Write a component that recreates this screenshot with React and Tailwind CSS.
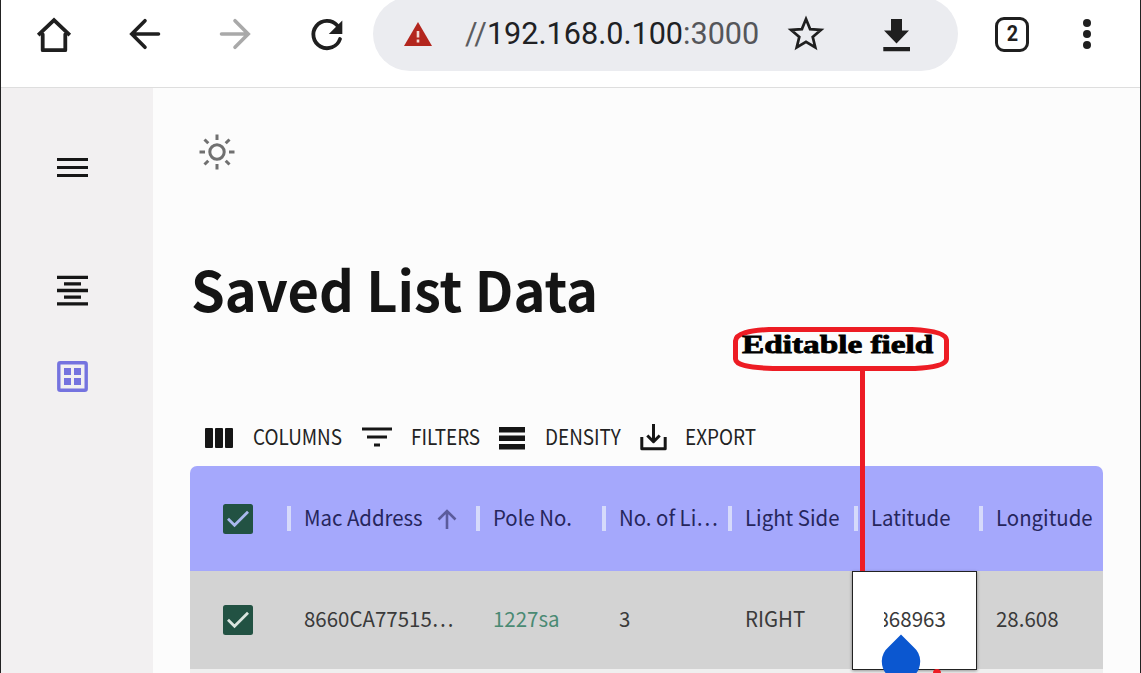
import React from "react";

const columns = [
  { label: "Mac Address", width: "w-[189px]", value: "8660CA77515…", sorted: true },
  { label: "Pole No.", width: "w-[126px]", value: "1227sa", green: true },
  { label: "No. of Li…", width: "w-[126px]", value: "3" },
  { label: "Light Side", width: "w-[126px]", value: "RIGHT" },
  { label: "Latitude", width: "w-[125px]", value: "868963", editing: true },
  { label: "Longitude", width: "w-[122px]", value: "28.608" },
];

function Checkbox({ tick }) {
  return (
    <svg className="block h-[30px] w-[30px]" viewBox="0 0 30 30">
      <rect width="30" height="30" rx="2.5" fill="#225243" />
      <path d="M5 14.8 11.5 21.2 25 7.8" fill="none" stroke={tick} strokeWidth="2.8" />
    </svg>
  );
}

function Browser() {
  return (
    <header className="flex h-[88px] shrink-0 items-start overflow-hidden border-b border-[#dedede] bg-white">
      <nav className="flex w-[372px] items-center pt-[15px] pl-[33px]">
        <svg className="h-10 w-10" viewBox="0 0 40 40" fill="none" stroke="#1f1f1f" strokeWidth="3.8" strokeLinejoin="round" strokeLinecap="round">
          <path d="M8.7 19.3V35.2H31.3V19.3" />
          <path d="M4.2 20.200 20 5.200 35.800 20.200" strokeLinejoin="miter" strokeLinecap="butt" />
        </svg>
        <svg className="ml-[50px] h-10 w-10" viewBox="0 0 40 40" fill="none" stroke="#1f1f1f" strokeWidth="3.6" strokeLinecap="round">
          <path d="M34.500 19H8M21 5.700 7.800 19 21 32.300" />
        </svg>
        <svg className="ml-[51px] h-10 w-10" viewBox="0 0 40 40" fill="none" stroke="#a9a9a9" strokeWidth="3.6" strokeLinecap="round">
          <path d="M6.500 19H33M20 5.700 33.200 19 20 32.300" />
        </svg>
        <svg className="ml-[52px] h-10 w-10" viewBox="0 0 40 40" fill="none" stroke="#1f1f1f" strokeWidth="3.8">
          <path d="M33 24A13.7 13.7 0 1 1 30.3 10.4" strokeLinecap="round" />
          <path d="M35.3 5.500V19H21.8Z" fill="#1f1f1f" stroke="none" />
        </svg>
      </nav>
      <div className="-mt-[3px] flex h-[74px] w-[585px] items-center rounded-full bg-[#ebecf0] pl-[31px]">
        <svg className="h-[26px] w-[28px]" viewBox="0 0 28 26">
          <path d="M14 1 28 25H0Z" fill="#b3261e" />
          <path d="M14 10v6.500M14 18.500v3" stroke="#f3d9d5" strokeWidth="2.6" />
        </svg>
        <div className="ml-[33px] w-[296px] whitespace-nowrap font-[Roboto,sans-serif] text-[30.6px] leading-none text-[#202124]">
          <span className="text-[#5b5c60]">//</span>192.168.0.100<span className="text-[#55565a]">:3000</span>
        </div>
        <svg className="ml-[25px] h-10 w-10" viewBox="0 0 40 40" fill="none" stroke="#1f1f1f" strokeWidth="2.7">
          <path d="M20 5 24.1 15.1 35 15.9 26.7 22.9 29.3 33.5 20 27.8 10.7 33.5 13.3 22.9 5 15.9 15.9 15.1Z" />
        </svg>
        <svg className="ml-[50px] h-10 w-10" viewBox="0 0 40 40" fill="#1f1f1f">
          <path d="M15 5H26V16.500H33L20.5 29.500 8 16.500H15ZM7.3 33H34V37.200H7.3Z" />
        </svg>
      </div>
      <div className="mt-[17px] ml-[37px] flex h-[35px] w-[34px] items-center justify-center rounded-[9px] border-[3.5px] border-[#1f1f1f] font-[Roboto,sans-serif] text-[22px] leading-none font-bold text-[#1f1f1f]">
        <span className="relative -top-px scale-x-90">2</span>
      </div>
      <div className="mt-[19px] ml-[54px] flex flex-col gap-[3px]">
        <i className="size-[8px] rounded-full bg-[#1f1f1f]" />
        <i className="size-[8px] rounded-full bg-[#1f1f1f]" />
        <i className="size-[8px] rounded-full bg-[#1f1f1f]" />
      </div>
    </header>
  );
}

function Sidebar() {
  return (
    <aside className="flex w-[152px] shrink-0 flex-col items-start bg-[#f2f0f1] pl-[56px]">
      <svg className="mt-[69px] h-[22px] w-[31px]" viewBox="0 0 31 22" stroke="#161616" strokeWidth="3.2">
        <path d="M0 2.5H31M0 10.5H31M0 18.5H31" />
      </svg>
      <svg className="mt-[96px] h-[32px] w-[31px]" viewBox="0 0 31 32" stroke="#161616" strokeWidth="3.3">
        <path d="M0 2.3H31M7 8.9H24M0 15.5H31M7 22.2H24M0 28.8H31" />
      </svg>
      <svg className="mt-[54px] h-[31px] w-[31px]" viewBox="0 0 31 31">
        <rect x="1.8" y="1.8" width="27.4" height="27.4" rx="1.5" fill="none" stroke="#7573df" strokeWidth="3.4" />
        <path d="M7 7h7v7H7zM17 7h7v7h-7zM7 17h7v7H7zM17 17h7v7h-7z" fill="#7573df" />
      </svg>
    </aside>
  );
}

function Toolbar() {
  return (
    <div className="flex h-[32px] items-center pl-[15px] text-[21px] leading-none whitespace-nowrap text-[#222]">
      <svg className="mt-[1px] h-[20px] w-[28px]" viewBox="0 0 28 20" fill="#161616">
        <rect width="8" height="20" rx="1" /><rect x="10" width="8" height="20" rx="1" /><rect x="20" width="8" height="20" rx="1" />
      </svg>
      <span className="-mt-[2px] ml-[20px] w-[90px]"><span className="inline-block origin-left scale-x-[0.9]">COLUMNS</span></span>
      <svg className="ml-[19px] h-[20px] w-[30px]" viewBox="0 0 30 20" stroke="#161616" strokeWidth="3">
        <path d="M0 2H30M5 10H25M12 18H18" />
      </svg>
      <span className="-mt-[2px] ml-[19px] w-[70px]"><span className="inline-block origin-left scale-x-[0.9]">FILTERS</span></span>
      <svg className="ml-[18px] mt-[1px] h-[24px] w-[26px]" viewBox="0 0 26 24" fill="#161616">
        <path d="M0 1H26V6.5H0ZM0 9.5H26V15H0ZM0 18H26V23.5H0Z" />
      </svg>
      <span className="-mt-[2px] ml-[20px] w-[76px]"><span className="inline-block origin-left scale-x-[0.9]">DENSITY</span></span>
      <svg className="ml-[19px] mt-[1px] h-[27px] w-[27px]" viewBox="0 0 27 27" fill="none" stroke="#161616" strokeWidth="3" strokeLinejoin="round">
        <path d="M1.8 13V24.8H25.2V13" /><path d="M13.5 0V17M7.3 11.5 13.5 17.7 19.7 11.5" />
      </svg>
      <span className="-mt-[2px] ml-[18px]"><span className="inline-block origin-left scale-x-[0.9]">EXPORT</span></span>
    </div>
  );
}

function Grid() {
  return (
    <section className="w-[913px] text-[21px] leading-none whitespace-nowrap">
      <div className="flex h-[105px] items-center overflow-hidden rounded-t-[7px] bg-[#a5a8fc] text-[#26265c]">
        <div className="w-[97px] shrink-0 pl-[33px]"><Checkbox tick="#aab9ee" /></div>
        {columns.map((c) => (
          <div key={c.label} className={`flex shrink-0 items-center ${c.width}`}>
            <i className="h-[25px] w-[4px] shrink-0 bg-[#d6dafb]" />
            <span className="mb-[3px] ml-[13px] origin-left scale-x-[0.97]">{c.label}</span>
            {c.sorted && (
              <svg className="ml-[11px] h-[20px] w-[20px]" viewBox="0 0 20 20" fill="none" stroke="#5b5b9c" strokeWidth="2.6">
                <path d="M10 20V2M1.5 10.5 10 2 18.5 10.5" />
              </svg>
            )}
          </div>
        ))}
      </div>
      <div className="flex h-[98px] items-center bg-[#d3d3d3] text-[#3a3a3a]">
        <div className="w-[97px] shrink-0 pl-[33px]"><Checkbox tick="#d9e5df" /></div>
        {columns.map((c) =>
          c.editing ? (
            <div key={c.label} className="relative -ml-[2px] mr-[2px] flex h-[99px] w-[125px] shrink-0 items-center border-[1.5px] border-[#222] bg-white shadow-[0_1px_3px_#0006]">
              <div className="mb-[4px] ml-[31px] flex w-[62px] justify-end overflow-hidden py-1"><span className="origin-right scale-x-[0.98]">{c.value}</span></div>
              <svg className="absolute top-[62px] left-[28px] h-[40px] w-[40px]" viewBox="0 0 40 40">
                <path d="M20 0.5 32.5 13A19.2 19.2 0 1 1 7.5 13Z" fill="#0b57d0" />
              </svg>
            </div>
          ) : (
            <div key={c.label} className={`shrink-0 pb-[4px] pl-[17px] ${c.width} ${c.green ? "text-[#4a8a73]" : ""}`}><span className="inline-block origin-left scale-x-[0.975]">{c.value}</span></div>
          )
        )}
      </div>
      <div className="h-[4px] bg-[#efefef]" />
    </section>
  );
}

function Callout() {
  return (
    <div className="pointer-events-none absolute top-[325px] left-[730px] h-[348px] w-[220px]">
      <svg className="absolute inset-0" width="220" height="348" viewBox="0 0 220 348" fill="none" stroke="#ed1c24" strokeWidth="5">
        <path d="M38 4.500H181C204 5.500 215 9 215.500 15V34C215 40 202 42.500 184 43.500H42C17 42.500 5 40 4.500 34V16C5 8 19 5.500 38 4.500Z" />
        <path d="M131.500 42V246" />
        <circle cx="206" cy="348" r="2" fill="#ed1c24" strokeWidth="4" />
      </svg>
      <span className="absolute top-[7px] left-[11px] origin-left scale-x-[1.28] font-['Liberation_Serif',serif] text-[26px] leading-none font-bold whitespace-nowrap text-black [-webkit-text-stroke:0.8px_black]">Editable field</span>
    </div>
  );
}

export default function App() {
  return (
    <div className="relative flex h-[673px] w-[1141px] flex-col overflow-hidden border-x border-[#222] bg-[#fcfcfc] font-['Noto_Sans_CJK_SC',sans-serif]">
      <Browser />
      <div className="flex min-h-0 flex-1">
        <Sidebar />
        <main className="flex flex-col pl-[37px]">
          <svg className="mt-[45px] ml-[8px] h-[38px] w-[38px]" viewBox="0 0 38 38" fill="none" stroke="#707070" strokeWidth="3">
            <circle cx="19" cy="19" r="7.200" />
            <path d="M19 1.500V7M19 31V36.500M1.500 19H7M31 19H36.500M6.500 6.500 10.300 10.300M27.700 27.700 31.500 31.500M31.500 6.500 27.700 10.300M10.300 27.700 6.500 31.500" />
          </svg>
          <h1 className="mt-[81px] ml-[1px] h-[72px] text-[55px] leading-[72px] font-bold whitespace-nowrap text-[#141414]"><span className="inline-block origin-left scale-x-[0.985]">Saved List Data</span></h1>
          <div className="mt-[97px]"><Toolbar /></div>
          <div className="mt-[13px]"><Grid /></div>
        </main>
      </div>
      <div className="absolute inset-0"><Callout /></div>
    </div>
  );
}
